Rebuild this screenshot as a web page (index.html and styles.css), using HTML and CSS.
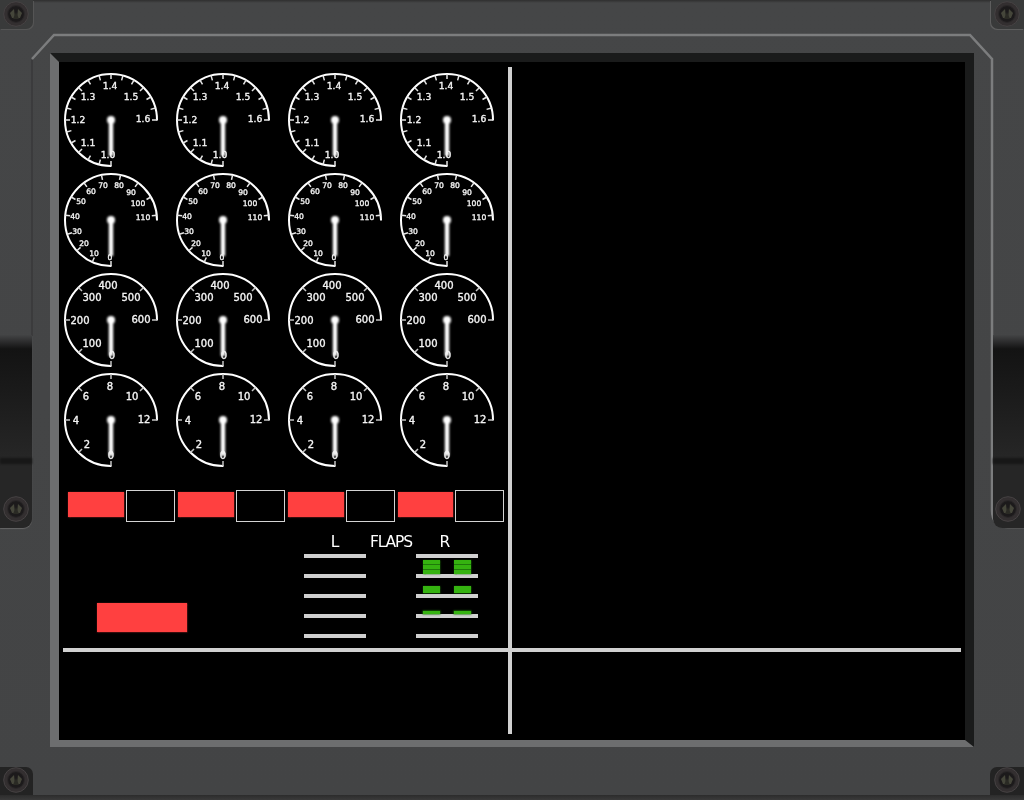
FILE: index.html
```html
<!DOCTYPE html>
<html lang="en">
<head>
<meta charset="utf-8">
<title>Engine display</title>
<link rel="stylesheet" href="styles.css">
</head>
<body>
<div class="bezel">
  <svg class="bezel-lines" viewBox="0 0 1024 800" aria-hidden="true">
    <defs>
      <filter id="soft-needle" x="-100%" y="-20%" width="300%" height="140%">
        <feGaussianBlur stdDeviation="0.9"/>
      </filter>
      <filter id="soft-text" x="-10%" y="-10%" width="120%" height="120%">
        <feGaussianBlur stdDeviation="0.35"/>
      </filter>
    </defs>
    <symbol id="screw" viewBox="-13 -13 26 26">
      <circle r="12.3" fill="#332f30" stroke="#464243" stroke-width="1"/>
      <circle r="8.4" fill="#1c1a1b" stroke="#2b2829" stroke-width="1"/>
      <path d="M-6 -1 L-2 -5 L-1 4 L-4 4Z" fill="#45463a"/>
      <path d="M6 -1 L2 -5 L1 4 L4 4Z" fill="#45463a"/>
      <path d="M0 -2 L3 5 L-3 5Z" fill="#2a2a24"/>
    </symbol>
    <path class="line-dark" d="M32 60 V336"/>
    <path class="line-light" d="M32 59 L54 35 H970 L992 59 V510 Q992 527 1008 527 H1024"/>
  </svg>

  <div class="pad pad-tl"></div>
  <div class="pad pad-tr"></div>
  <div class="pad pad-bl"></div>
  <div class="pad pad-br"></div>
  <div class="notch notch-l"><div class="notch-band"></div></div>
  <div class="notch notch-r"><div class="notch-band"></div></div>

  <svg class="screw screw-tl" aria-hidden="true"><use href="#screw"/></svg>
  <svg class="screw screw-tr" aria-hidden="true"><use href="#screw"/></svg>
  <svg class="screw screw-ml" aria-hidden="true"><use href="#screw"/></svg>
  <svg class="screw screw-mr" aria-hidden="true"><use href="#screw"/></svg>
  <svg class="screw screw-bl" aria-hidden="true"><use href="#screw"/></svg>
  <svg class="screw screw-br" aria-hidden="true"><use href="#screw"/></svg>

  <main class="screen">
    <section class="panel">
      <div class="gauges" id="gauges"></div>

      <div class="strip">
        <div class="pair"><div class="warn"></div><div class="box"></div></div>
        <div class="pair"><div class="warn"></div><div class="box"></div></div>
        <div class="pair"><div class="warn"></div><div class="box"></div></div>
        <div class="pair"><div class="warn"></div><div class="box"></div></div>
      </div>

      <div class="lower">
        <div class="warn-big"></div>
        <div class="flaps">
          <div class="flaps-head">
            <span class="flaps-l">L</span>
            <span class="flaps-title">FLAPS</span>
            <span class="flaps-r">R</span>
          </div>
          <div class="flaps-body">
            <div class="track">
              <div class="rule"></div><div class="slot"></div>
              <div class="rule"></div><div class="slot"></div>
              <div class="rule"></div><div class="slot"></div>
              <div class="rule"></div><div class="slot"></div>
              <div class="rule"></div>
            </div>
            <div class="track">
              <div class="rule"></div>
              <div class="slot slot-full"><div class="bar bar-3"></div><div class="bar bar-3"></div></div>
              <div class="rule"></div>
              <div class="slot"><div class="bar bar-2"></div><div class="bar bar-2"></div></div>
              <div class="rule"></div>
              <div class="slot"><div class="bar bar-1"></div><div class="bar bar-1"></div></div>
              <div class="rule"></div><div class="slot"></div>
              <div class="rule"></div>
            </div>
          </div>
        </div>
      </div>
    </section>
    <div class="vline"></div>
    <div class="hline"></div>
  </main>
</div>
<script src="script.js"></script>
</body>
</html>
```
FILE: styles.css
```css
* { box-sizing: border-box; }

html, body {
  margin: 0;
  padding: 0;
  background: #434445;
}

.bezel {
  position: relative;
  width: 1024px;
  height: 800px;
  overflow: hidden;
  padding: 53px 50px 53px 50px;
  background: linear-gradient(to bottom, #2f2f2f 0, #454647 3px, #434445 795px, #2c2c2c 795px, #3a3a3a 800px);
  font-family: "DejaVu Sans", sans-serif;
}

.bezel-lines {
  position: absolute;
  inset: 0;
  width: 1024px;
  height: 800px;
  fill: none;
}
.line-light { stroke: #7c7d7e; stroke-width: 2.5; fill: none; }
.line-dark { stroke: #38393a; stroke-width: 1.5; fill: none; }

.pad {
  position: absolute;
  width: 33px;
  height: 29px;
}
.pad-tl { left: 0; top: 0; background: #393a3a; border-radius: 0 0 7px 0; box-shadow: 1px 1px 0 #555; }
.pad-tr { right: 0; top: 0; background: #393a3a; border-radius: 0 0 0 7px; box-shadow: -1px 1px 0 #5e5e5e; }
.pad-bl { left: 0; top: 767px; height: 28px; background: #232323; border-radius: 0 7px 0 0; }
.pad-br { right: 0; top: 767px; height: 28px; width: 34px; background: #232323; border-radius: 7px 0 0 0; }

.notch {
  position: absolute;
  top: 335px;
  width: 32px;
  height: 193px;
  background: linear-gradient(to bottom, #434445 0, #131313 14px, #1b1b1b 60px, #262626 122px, #262626 100%);
}
.notch-l { left: 0; border-radius: 0 0 9px 0; box-shadow: 0 1px 1px #666; }
.notch-r { right: 0; width: 31px; border-radius: 0 0 0 9px; }

.notch-band {
  margin-top: 123px;
  height: 6px;
  background: #171717;
  filter: blur(1px);
}

.screw {
  position: absolute;
  width: 26px;
  height: 26px;
}
.screw-tl { left: 3px; top: 1px; }
.screw-tr { left: 994px; top: 1px; }
.screw-ml { left: 3px; top: 496px; }
.screw-mr { left: 995px; top: 496px; }
.screw-bl { left: 3px; top: 767px; }
.screw-br { left: 994px; top: 767px; }

.screen {
  position: relative;
  width: 924px;
  height: 694px;
  display: grid;
  grid-template-columns: 4px 445px 4px 449px 4px;
  grid-template-rows: 5px 581px 4px 82px 6px;
  background: #000;
  background-clip: padding-box;
  border-style: solid;
  border-width: 9px 9px 7px 9px;
  border-color: #1a1b1b #1a1b1b #6d6e6f #6d6e6f;
}

.panel {
  grid-column: 2;
  grid-row: 2;
  display: flex;
  flex-direction: column;
  padding-top: 3px;
}

.vline {
  grid-column: 3;
  grid-row: 2 / 5;
  background: #d0d0d0;
}
.hline {
  grid-column: 2 / 5;
  grid-row: 3;
  background: #d0d0d0;
}

.gauges {
  display: grid;
  grid-template-columns: repeat(4, 96px);
  grid-auto-rows: 100px;
  column-gap: 16px;
}
.gauge {
  display: block;
  width: 96px;
  height: 100px;
}
.g-arc { fill: none; stroke: #fff; stroke-width: 2; }
.g-tick { fill: none; stroke: #e4e4e4; stroke-width: 1.5; }
.g-tick-dim { stroke: #c4c4c4; }
.g-needle { fill: #fff; }
.g-label {
  fill: #f4f4f4;
  stroke: #f4f4f4;
  stroke-width: 0.35;
  text-anchor: middle;
  dominant-baseline: central;
  font-family: "DejaVu Sans", sans-serif;
}

.strip {
  margin-top: 20px;
  padding-left: 4px;
  height: 32px;
  display: flex;
  gap: 2px;
}
.pair {
  width: 108px;
  display: flex;
  gap: 2px;
}
.pair:last-child { width: 107px; }
.warn {
  flex: 1;
  height: 25px;
  margin-top: 2px;
  background: #ff4040;
  box-shadow: 0 0 1.5px 0.5px #b02c2c;
  filter: blur(0.4px);
}
.pair .warn { margin-left: 0.5px; margin-right: 0.5px; }
.box {
  width: 49px;
  height: 32px;
  border: 1px solid #d4d4d4;
}

.lower {
  flex: 1;
  display: flex;
  padding: 12px 0 0 34px;
}
.warn-big {
  width: 90px;
  height: 29px;
  margin-top: 69px;
  background: #ff4040;
  box-shadow: 0 0 1.5px 0.5px #b02c2c;
  filter: blur(0.4px);
}
.flaps {
  margin-left: 117px;
  width: 174px;
}
.flaps-head {
  display: grid;
  grid-template-columns: 62px 50px 62px;
  height: 16px;
  margin-bottom: 4px;
  color: #fff;
  font-size: 15.5px;
  line-height: 16px;
  text-align: center;
  filter: blur(0.25px);
}
.flaps-title { letter-spacing: -1.1px; }
.flaps-r { padding-right: 4px; }

.flaps-body {
  display: flex;
  justify-content: space-between;
}
.track {
  width: 62px;
  display: flex;
  flex-direction: column;
}
.rule {
  height: 4px;
  background: #d0d0d0;
}
.slot {
  height: 16px;
  padding-left: 7px;
  display: flex;
  gap: 13px;
  align-items: flex-end;
}
.bar {
  width: 17px;
  margin: 0 0.5px;
  background: #35b310;
  box-shadow: 0 0 1.5px 0.5px #1f7a0a;
  filter: blur(0.4px);
}
.slot .bar:first-child { margin-left: -0.5px; margin-right: 1.5px; }
.slot .bar:last-child { margin-left: -0.5px; margin-right: 1.5px; }
.bar-3 {
  height: 14px;
  margin-bottom: 0.5px;
  background: repeating-linear-gradient(to bottom, #35b310 0, #35b310 4px, #1f7a0a 4px, #1f7a0a 5px);
}
.bar-2 { height: 7px; margin-bottom: 1.5px; }
.bar-1 { height: 3.5px; }
```
FILE: script.js
```js
var SVG_NS = "http://www.w3.org/2000/svg";

/* step: degrees between ticks, measured clockwise from the bottom of the dial */
var GAUGES = [
  { step: 15, count: 19, size: 9.2, labels: [
    ["1.0", -3, 34], ["1.1", -23, 22], ["1.2", -33, -1], ["1.3", -23, -24],
    ["1.4", -1, -35], ["1.5", 20, -24], ["1.6", 32, -2]
  ] },
  { step: 24, count: 12, size: 7.6, labels: [
    ["0", -1, 37], ["10", -17, 33], ["20", -27, 23], ["30", -34, 11],
    ["40", -36, -4], ["50", -30, -19], ["60", -20, -29], ["70", -8, -35],
    ["80", 8, -35], ["90", 20, -28], ["100", 27, -17], ["110", 32, -3]
  ] },
  { step: 45, count: 7, skip: 4, dim: true, size: 10, labels: [
    ["0", 1, 35], ["100", -19, 23], ["200", -31, 0], ["300", -19, -23],
    ["400", -3, -35], ["500", 20, -23], ["600", 30, -1]
  ] },
  { step: 45, count: 7, dim: true, size: 10, labels: [
    ["0", 0, 35], ["2", -24, 24], ["4", -35, 0], ["6", -25, -24],
    ["8", -1, -34], ["10", 21, -24], ["12", 33, -1]
  ] }
];

function el(name, attrs, parent) {
  var node = document.createElementNS(SVG_NS, name);
  Object.keys(attrs).forEach(function (key) { node.setAttribute(key, attrs[key]); });
  parent.appendChild(node);
  return node;
}

function buildGauge(spec) {
  var svg = document.createElementNS(SVG_NS, "svg");
  svg.setAttribute("class", "gauge");
  svg.setAttribute("viewBox", "-48 -50 96 100");

  el("path", { "class": "g-arc", d: "M0.5 46 A46 46 0 1 1 46 0.5" }, svg);

  var d = "";
  for (var i = 0; i < spec.count; i++) {
    if (i === spec.skip) continue;
    var t = (i * spec.step * Math.PI) / 180;
    var s = -Math.sin(t), c = Math.cos(t);
    d += "M" + (s * 46).toFixed(2) + " " + (c * 46).toFixed(2) +
         "L" + (s * 41).toFixed(2) + " " + (c * 41).toFixed(2);
  }
  el("path", { "class": spec.dim ? "g-tick g-tick-dim" : "g-tick", d: d }, svg);

  var needle = el("g", { filter: "url(#soft-needle)" }, svg);
  el("rect", { "class": "g-needle", x: -2.2, y: 0, width: 4.4, height: 36 }, needle);
  el("circle", { "class": "g-needle", cx: 0, cy: 0, r: 4 }, needle);

  var labels = el("g", { filter: "url(#soft-text)" }, svg);
  spec.labels.forEach(function (l) {
    var text = el("text", { "class": "g-label", x: l[1], y: l[2], "font-size": spec.size }, labels);
    text.textContent = l[0];
  });
  return svg;
}

var host = document.getElementById("gauges");
GAUGES.forEach(function (spec) {
  for (var col = 0; col < 4; col++) host.appendChild(buildGauge(spec));
});
```
